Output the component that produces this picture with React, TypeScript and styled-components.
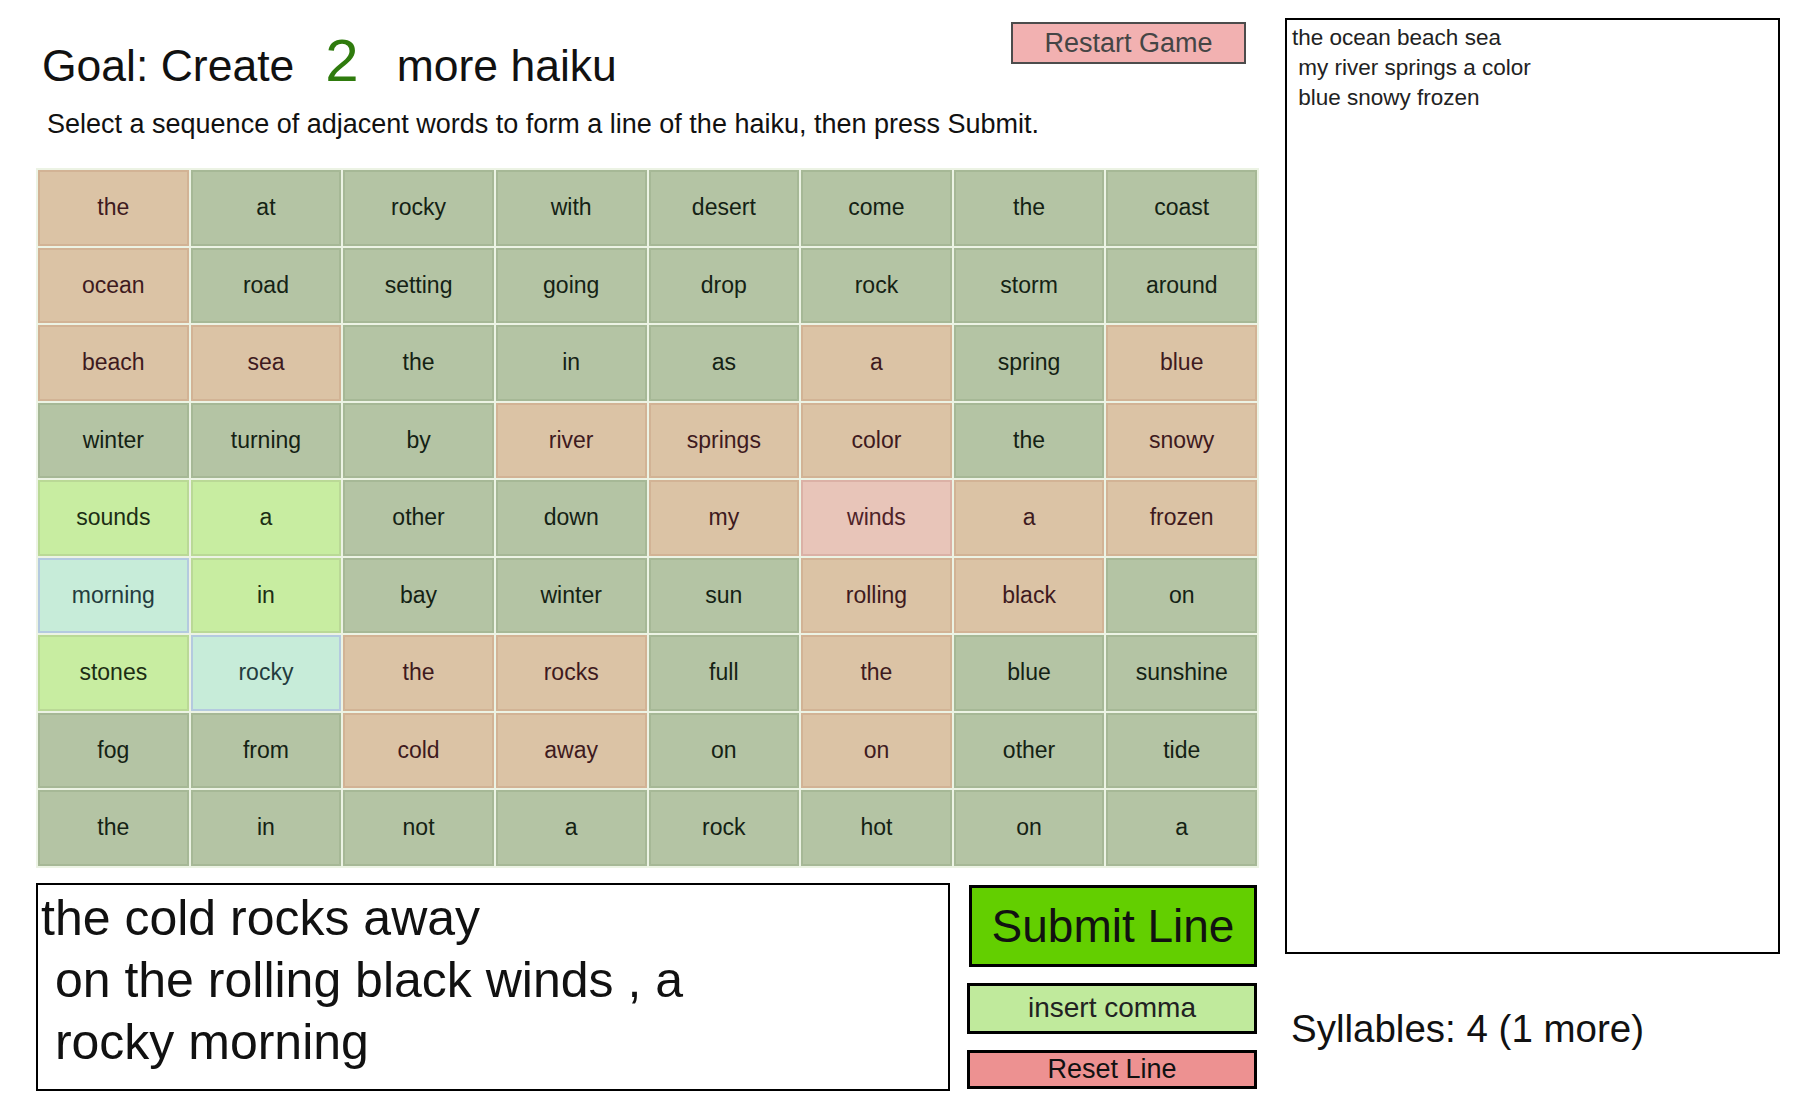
import React from 'react';
import styled, { createGlobalStyle } from 'styled-components';

type CellKind = 'plain' | 'used' | 'near' | 'picked' | 'hot';

const GlobalStyle = createGlobalStyle`
  html, body {
    margin: 0;
    padding: 0;
    background: #fff;
    overflow: hidden;
  }
  body {
    font-family: 'Liberation Sans', Arial, sans-serif;
    color: #111;
  }
`;

// letter: t = used (tan), n = near (light green), p = picked (mint), h = hot (pink)
const board: string[][] = [
  ['the:t', 'at', 'rocky', 'with', 'desert', 'come', 'the', 'coast'],
  ['ocean:t', 'road', 'setting', 'going', 'drop', 'rock', 'storm', 'around'],
  ['beach:t', 'sea:t', 'the', 'in', 'as', 'a:t', 'spring', 'blue:t'],
  ['winter', 'turning', 'by', 'river:t', 'springs:t', 'color:t', 'the', 'snowy:t'],
  ['sounds:n', 'a:n', 'other', 'down', 'my:t', 'winds:h', 'a:t', 'frozen:t'],
  ['morning:p', 'in:n', 'bay', 'winter', 'sun', 'rolling:t', 'black:t', 'on'],
  ['stones:n', 'rocky:p', 'the:t', 'rocks:t', 'full', 'the:t', 'blue', 'sunshine'],
  ['fog', 'from', 'cold:t', 'away:t', 'on', 'on:t', 'other', 'tide'],
  ['the', 'in', 'not', 'a', 'rock', 'hot', 'on', 'a'],
];

const kinds: Record<string, CellKind> = {
  t: 'used',
  n: 'near',
  p: 'picked',
  h: 'hot',
};

const palette: Record<CellKind, { bg: string; edge: string; ink: string }> = {
  plain: { bg: '#b4c4a4', edge: '#a6b896', ink: '#142214' },
  used: { bg: '#dbc3a5', edge: '#d2b395', ink: '#3e1a1e' },
  near: { bg: '#c8eda1', edge: '#bad996', ink: '#1c2e14' },
  picked: { bg: '#c7ecd9', edge: '#b4cadf', ink: '#243c3e' },
  hot: { bg: '#e8c5b9', edge: '#dbb1a6', ink: '#4e2228' },
};

const history = 'the ocean beach sea\n my river springs a color\n blue snowy frozen';
const draft = 'the cold rocks away\n on the rolling black winds , a\n rocky morning';

const App = () => {
  return (
    <>
      <GlobalStyle />
      <Page>
        <GameColumn>
          <Header>
            <Title>
              Goal: Create<Count>2</Count>more haiku
            </Title>
            <RestartButton>Restart Game</RestartButton>
          </Header>
          <Hint>
            Select a sequence of adjacent words to form a line of the haiku, then press Submit.
          </Hint>

          <Board>
            {board.map((row, r) =>
              row.map((entry, c) => {
                const [word, flag] = entry.split(':');
                const kind = flag ? kinds[flag] : 'plain';
                return (
                  <Cell key={`${r}-${c}`} $kind={kind}>
                    {word}
                  </Cell>
                );
              })
            )}
          </Board>

          <Composer>
            <Draft>{draft}</Draft>
            <Controls>
              <SubmitButton>Submit Line</SubmitButton>
              <CommaButton>insert comma</CommaButton>
              <ResetButton>Reset Line</ResetButton>
            </Controls>
          </Composer>
        </GameColumn>

        <SideColumn>
          <History>{history}</History>
          <Syllables>Syllables: 4 (1 more)</Syllables>
        </SideColumn>
      </Page>
    </>
  );
};

export default App;

const Page = styled.div`
  display: flex;
  align-items: flex-start;
  padding: 18px 0 0 36px;
  width: 1799px;
  height: 1099px;
  box-sizing: border-box;
`;

const GameColumn = styled.div`
  width: 1223px;
  display: flex;
  flex-direction: column;
`;

const Header = styled.div`
  display: flex;
  justify-content: space-between;
  align-items: flex-start;
  height: 86px;
`;

const Title = styled.h1`
  margin: 15px 0 0 6px;
  font-weight: 400;
  font-size: 44.5px;
  line-height: 56px;
  color: #111;
  display: flex;
  align-items: baseline;
`;

const Count = styled.span`
  font-size: 60px;
  color: #2f7b0d;
  margin: 0 38px 0 31px;
`;

const RestartButton = styled.button`
  margin: 4px 13px 0 0;
  width: 235px;
  height: 42px;
  background: #f2b1b1;
  border: 2px solid #4c4c4c;
  color: #454545;
  font-family: 'Liberation Sans', Arial, sans-serif;
  font-size: 27px;
  padding: 0;
  cursor: pointer;
`;

const Hint = styled.p`
  margin: 0 0 0 11px;
  font-size: 27px;
  line-height: 40px;
  color: #111;
  height: 64px;
`;

const Board = styled.div`
  display: grid;
  grid-template-columns: repeat(8, 1fr);
  grid-auto-rows: 75.5px;
  gap: 2px;
  padding: 2px;
  background: #ecf3e4;
`;

const Cell = styled.div<{ $kind: CellKind }>`
  display: flex;
  align-items: center;
  justify-content: center;
  box-sizing: border-box;
  background: ${({ $kind }) => palette[$kind].bg};
  border: 2px solid ${({ $kind }) => palette[$kind].edge};
  color: ${({ $kind }) => palette[$kind].ink};
  font-size: 23px;
  cursor: pointer;
`;

const Composer = styled.div`
  display: flex;
  align-items: flex-start;
  gap: 17px;
  margin-top: 15px;
`;

const Draft = styled.div`
  width: 914px;
  height: 208px;
  box-sizing: border-box;
  border: 2px solid #000;
  padding: 2px 3px;
  white-space: pre-wrap;
  font-size: 50px;
  line-height: 62px;
  color: #111;
`;

const Controls = styled.div`
  width: 290px;
  margin-top: 2px;
  display: flex;
  flex-direction: column;
  gap: 16px;
`;

const ControlButton = styled.button`
  box-sizing: border-box;
  width: 100%;
  border: 3px solid #000;
  padding: 0;
  font-family: 'Liberation Sans', Arial, sans-serif;
  color: #111;
  cursor: pointer;
`;

const SubmitButton = styled(ControlButton)`
  margin-left: 2px;
  width: 288px;
  height: 82px;
  background: #63cf00;
  font-size: 46px;
`;

const CommaButton = styled(ControlButton)`
  height: 51px;
  background: #c0ea9c;
  font-size: 28px;
  color: #222;
`;

const ResetButton = styled(ControlButton)`
  height: 39px;
  background: #ed9191;
  font-size: 27px;
`;

const SideColumn = styled.div`
  margin-left: 26px;
  width: 495px;
  display: flex;
  flex-direction: column;
`;

const History = styled.div`
  height: 936px;
  box-sizing: border-box;
  border: 2px solid #000;
  padding: 3px 5px;
  white-space: pre;
  font-size: 22.5px;
  line-height: 30px;
  color: #222;
`;

const Syllables = styled.div`
  margin-top: 53px;
  padding-left: 6px;
  font-size: 38.5px;
  line-height: 44px;
  color: #111;
`;
